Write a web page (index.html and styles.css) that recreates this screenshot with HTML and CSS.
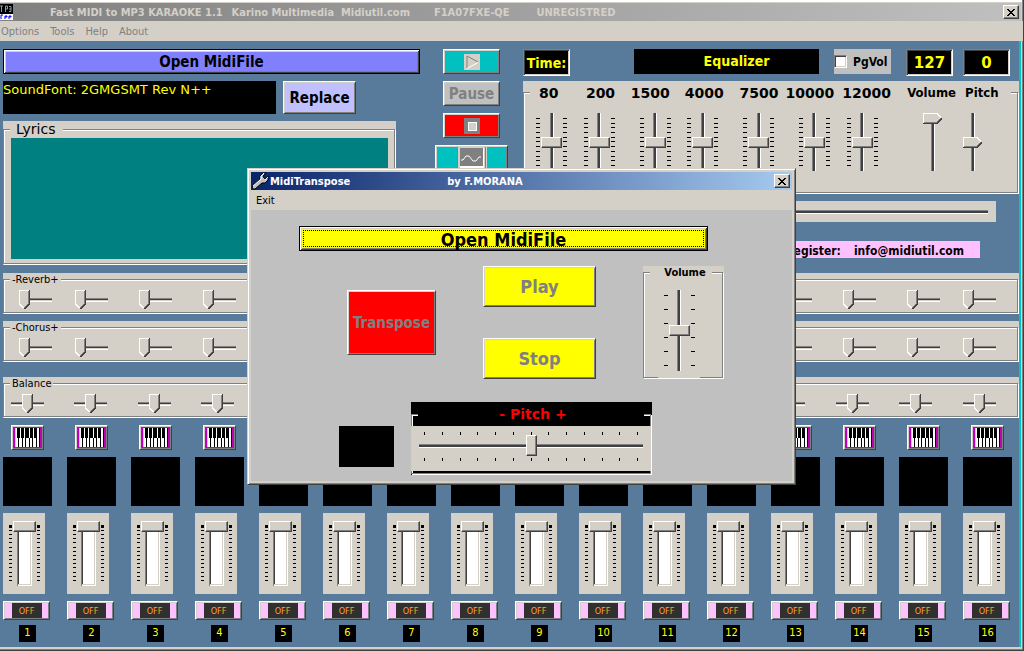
FILE: index.html
```html
<!DOCTYPE html>
<html lang="en">
<head>
    <meta charset="UTF-8">
    <meta name="viewport" content="width=device-width, initial-scale=1.0">
    <title>Fast MIDI to MP3 KARAOKE</title>
    <link rel="stylesheet" href="styles.css">
</head>
<body>

<svg class="symbols" aria-hidden="true">
    <symbol id="icon-close" viewBox="0 0 10 9">
        <path d="M1 1h2v1h1v1h2V2h1V1h2v1H8v1H7v1H6v1h1v1h1v1h1v1H7V7H6V6H4v1H3v1H1V7h1V6h1V5h1V4H3V3H2V2H1z" fill="#000"/>
    </symbol>
    <symbol id="icon-keys" viewBox="0 0 29 21">
        <path d="M0 0h29v21H0z" fill="#c000c0"/>
        <path d="M2 1h25v19H2z" fill="#fff"/>
        <path d="M2 1h1v19H2z" fill="#d4d0c8"/>
        <path d="M4 1h3v10H4zM8 1h3v10H8zM13 1h3v10h-3zM17 1h3v10h-3zM21 1h3v10h-3zM26 1h1v19h-1zM5 11h1v9H5zM9 11h1v9H9zM12 1h1v19h-1zM16 11h1v9h-1zM19 11h1v9h-1zM23 11h1v9h-1z" fill="#000"/>
    </symbol>
</svg>

<div class="window">
    <div class="titlebar">
        <svg class="app-icon" viewBox="0 0 13 16">
            <path d="M0 0h13v10H0z" fill="#000"/>
            <path d="M0 10h13v6H0z" fill="#fff"/>
            <path d="M0 2h3M1.500 2v6M5.500 8V2h2v3h-2M9 2.500h2v5H9M9 5h2" stroke="#8898b8" fill="none"/>
            <path d="M1 15v-4h2M5 15v-3h2v1H5M9 15v-3h2v1H9" stroke="#00f" fill="none"/>
        </svg>
        <span class="title-name">Fast MIDI to MP3 KARAOKE 1.1</span>
        <span class="title-vendor">Karino Multimedia&nbsp; Midiutil.com</span>
        <span class="title-code">F1A07FXE-QE</span>
        <span class="title-status">UNREGISTRED</span>
        <button class="close" aria-label="Close"><svg width="10" height="9"><use href="#icon-close"/></svg></button>
    </div>
    <nav class="menu">
        <a href="#options">Options</a>
        <a href="#tools">Tools</a>
        <a href="#help">Help</a>
        <a href="#about">About</a>
    </nav>

    <div class="client">
        <div class="top">
            <div class="left">
                <button class="btn open-main">Open MidiFile</button>
                <div class="font-row">
                    <div class="soundfont">SoundFont: 2GMGSMT Rev N++</div>
                    <button class="btn replace">Replace</button>
                </div>
                <div class="panel lyrics">
                    <fieldset>
                        <legend>Lyrics</legend>
                        <div class="lyrics-screen"></div>
                    </fieldset>
                </div>
            </div>

            <div class="transport">
                <button class="btn play-main" aria-label="Play">
                    <svg width="16" height="16" viewBox="0 0 16 16"><path d="M0 0h16v16H0z" fill="#d4d0c8"/><path d="M3 14V2l11 6" fill="none" stroke="#808080"/><path d="M3 14.500L14 8.500" stroke="#fff"/></svg>
                </button>
                <button class="btn pause-main" disabled>Pause</button>
                <button class="btn stop-main" aria-label="Stop">
                    <svg width="16" height="16" viewBox="0 0 16 16"><path d="M0 0h16v16H0z" fill="#808080"/><path d="M4 4h9v9H4z" fill="#fff"/><path d="M5 5h7v7H5z" fill="#d4d0c8"/></svg>
                </button>
                <button class="btn wave-main" aria-label="Wave">
                    <svg width="30" height="22" viewBox="0 0 30 22"><path d="M0 0h30v22H0z" fill="#d4d0c8"/><path d="M0 0h1v22H0zM28 0h1v22h-1z" fill="#808080"/><path d="M3 1h24v20H3z" fill="#fff"/><path d="M3 1h23v18H3z" fill="#808080"/><path d="M4 13h2l3-4h3l4 5h3l3-4h2" fill="none" stroke="#fff"/></svg>
                </button>
            </div>

            <div class="right">
                <div class="readouts">
                    <div class="readout time">Time:</div>
                    <div class="eq-title">Equalizer</div>
                    <label class="pgvol"><input type="checkbox">PgVol</label>
                    <output class="readout volume-value">127</output>
                    <output class="readout">0</output>
                </div>
                <div class="panel equalizer">
                    <fieldset>
                        <legend>
                            <label for="eq-80">80</label>
                            <label for="eq-200">200</label>
                            <label for="eq-1500">1500</label>
                            <label for="eq-4000">4000</label>
                            <label for="eq-7500">7500</label>
                            <label for="eq-10000">10000</label>
                            <label for="eq-12000">12000</label>
                            <label class="word" for="main-volume">Volume</label>
                            <label class="word" for="main-pitch">Pitch</label>
                        </legend>
                        <div class="eq-sliders">
                            <div class="ticked"><span class="ticks" data-count="11"></span><input id="eq-80" class="vertical" type="range"><span class="ticks" data-count="11"></span></div>
                            <div class="ticked"><span class="ticks" data-count="11"></span><input id="eq-200" class="vertical" type="range"><span class="ticks" data-count="11"></span></div>
                            <div class="ticked"><span class="ticks" data-count="11"></span><input id="eq-1500" class="vertical" type="range"><span class="ticks" data-count="11"></span></div>
                            <div class="ticked"><span class="ticks" data-count="11"></span><input id="eq-4000" class="vertical" type="range"><span class="ticks" data-count="11"></span></div>
                            <div class="ticked"><span class="ticks" data-count="11"></span><input id="eq-7500" class="vertical" type="range"><span class="ticks" data-count="11"></span></div>
                            <div class="ticked"><span class="ticks" data-count="11"></span><input id="eq-10000" class="vertical" type="range"><span class="ticks" data-count="11"></span></div>
                            <div class="ticked"><span class="ticks" data-count="11"></span><input id="eq-12000" class="vertical" type="range"><span class="ticks" data-count="11"></span></div>
                            <input id="main-volume" class="vertical pointed" type="range" max="127" value="127">
                            <input id="main-pitch" class="vertical pointed" type="range" min="-12" max="12" value="0">
                        </div>
                    </fieldset>
                </div>
                <div class="position"><input class="horizontal" type="range" value="0" aria-label="Song position"></div>
                <div class="register"><span>To register:</span><span>info@midiutil.com</span></div>
            </div>
        </div>

        <div class="panel effect">
            <fieldset>
                <legend>-Reverb+</legend>
                <div class="effect-row" data-effect="Reverb" data-value="0"></div>
            </fieldset>
        </div>
        <div class="panel effect">
            <fieldset>
                <legend>-Chorus+</legend>
                <div class="effect-row" data-effect="Chorus" data-value="0"></div>
            </fieldset>
        </div>
        <div class="panel effect balance">
            <fieldset>
                <legend>Balance</legend>
                <div class="effect-row" data-effect="Balance" data-value="64"></div>
            </fieldset>
        </div>

        <div class="channels" id="channels"></div>
    </div>
</div>

<div class="dialog" role="dialog" aria-label="MidiTranspose">
    <div class="dialog-title">
        <svg width="18" height="18" viewBox="0 0 18 18">
            <path d="M1 15L9 7V4l3-3h3l-3 3 1 2 2 1 2-3v4l-3 3h-3l-7 6H2z" fill="#c0c0c0" stroke="#000"/>
            <path d="M2 14l8-7V4l3-3M14 8l3-3" stroke="#fff" fill="none"/>
        </svg>
        <span class="dialog-name">MidiTranspose</span>
        <span>by F.MORANA</span>
        <button class="close" aria-label="Close"><svg width="10" height="9"><use href="#icon-close"/></svg></button>
    </div>
    <nav class="menu"><a href="#exit">Exit</a></nav>
    <div class="dialog-body">
        <button class="btn open-dialog"><span>Open MidiFile</span></button>
        <div class="dialog-controls">
            <button class="btn transpose" disabled>Transpose</button>
            <div class="play-stop">
                <button class="btn" disabled>Play</button>
                <button class="btn" disabled>Stop</button>
            </div>
            <div class="panel dialog-volume">
                <fieldset>
                    <legend><label for="dialog-volume">Volume</label></legend>
                    <div class="ticked"><span class="ticks" data-count="6"></span><input id="dialog-volume" class="vertical" type="range"><span class="ticks" data-count="6"></span></div>
                </fieldset>
            </div>
        </div>
        <div class="dialog-bottom">
            <div class="display"></div>
            <div class="dialog-pitch">
                <fieldset>
                    <legend><label for="dialog-pitch">- Pitch +</label></legend>
                    <div class="pitch-track">
                        <span class="ticks across" data-count="13"></span>
                        <input id="dialog-pitch" class="horizontal" type="range" min="-6" max="6" value="0">
                        <span class="ticks across" data-count="13"></span>
                    </div>
                </fieldset>
            </div>
        </div>
    </div>
</div>

<script src="script.js"></script>
</body>
</html>
```
FILE: styles.css
```css
* {
    box-sizing: border-box;
}
body {
    margin: 0;
    font-family: "DejaVu Sans Condensed", "DejaVu Sans", sans-serif;
    font-size: 11px;
    color: #000;
    background: #d4d0c8;
}
button, input {
    font-family: inherit;
    margin: 0;
}
button {
    padding: 0;
}
fieldset {
    margin: 0;
    padding: 0;
    min-width: 0;
    border: 1px solid #808080;
    box-shadow: inset 1px 1px #fff, 1px 1px #fff;
}
legend {
    padding: 0;
}
.symbols {
    display: none;
}

/* main window */
.window {
    display: flex;
    flex-direction: column;
    min-height: 100vh;
    padding-top: 3px;
    border-right: 1px solid #404040;
    border-bottom: 1px solid #404040;
    box-shadow: inset -1px -1px #808080, inset 0 2px #fff;
}
.titlebar {
    display: flex;
    align-items: center;
    height: 18px;
    margin-right: 2px;
    padding-right: 2px;
    background: linear-gradient(to right, #808080, #c0c0c0);
    color: #d4d0c8;
    font-weight: bold;
    white-space: nowrap;
}
.app-icon {
    width: 13px;
    height: 16px;
}
.title-name {
    margin-left: 37px;
}
.title-vendor {
    margin-left: 9px;
}
.title-code {
    margin-left: 24px;
}
.title-status {
    margin-left: 27px;
}
.close {
    display: flex;
    align-items: center;
    justify-content: center;
    width: 16px;
    height: 14px;
    margin-left: auto;
    background: #d4d0c8;
    border: 1px solid;
    border-color: #fff #404040 #404040 #fff;
    box-shadow: inset -1px -1px #808080;
}
.menu {
    display: flex;
    gap: 11px;
    height: 20px;
    line-height: 22px;
    padding-left: 1px;
    background: #d4d0c8;
}
.menu a {
    color: #808080;
    text-decoration: none;
}
.client {
    flex: 1;
    margin: 0 2px 3px 0;
    padding: 8px 0 0 3px;
    background: #587a9b;
    border-right: 2px solid #00c4c4;
}

/* shared controls */
.btn {
    display: flex;
    align-items: center;
    justify-content: center;
    border: 1px solid;
    border-color: #fff #404040 #404040 #fff;
    box-shadow: inset 1px 1px #d4d0c8, inset -1px -1px #808080;
    font-weight: bold;
    color: #000;
}
.btn:disabled {
    color: #808080;
}
.panel {
    background: #d4d0c8;
}
.ticked {
    display: flex;
    gap: 1px;
}
.ticks {
    display: flex;
    flex-direction: column;
    justify-content: space-between;
    width: 4px;
}
.ticks i {
    height: 1px;
    background: #000;
}
.ticks.across {
    flex-direction: row;
    width: auto;
    height: 3px;
}
.ticks.across i {
    width: 1px;
    height: 3px;
}
input[type="range"] {
    display: block;
    appearance: none;
    -webkit-appearance: none;
    background: none;
}
.vertical {
    writing-mode: vertical-lr;
    direction: rtl;
    width: 21px;
    height: 58px;
}
.vertical::-webkit-slider-runnable-track {
    width: 100%;
    height: 100%;
    background: linear-gradient(to right, #808080 1px, #404040 1px 3px, #fff 3px) center / 4px 100% no-repeat;
}
.vertical::-webkit-slider-thumb {
    -webkit-appearance: none;
    width: 21px;
    height: 11px;
    background: #d4d0c8;
    border: 1px solid;
    border-color: #fff #404040 #404040 #fff;
    box-shadow: inset -1px -1px #808080;
}
.vertical.pointed {
    width: 19px;
}
.vertical.pointed::-webkit-slider-thumb {
    width: 19px;
    border: 0;
    box-shadow: none;
    background: url("data:image/svg+xml,%3Csvg xmlns='http://www.w3.org/2000/svg' width='19' height='11' shape-rendering='crispEdges'%3E%3Cpath d='M0 0h14l5 5v1l-5 5H0z' fill='%23d4d0c8'/%3E%3Cpath d='M.5 10V.5H14l4 4' fill='none' stroke='%23fff'/%3E%3Cpath d='M1 9.500h13l4-4' fill='none' stroke='%23808080'/%3E%3Cpath d='M0 10.500h14l5-5' fill='none' stroke='%23404040'/%3E%3C/svg%3E") no-repeat;
}
.horizontal {
    width: 100%;
    height: 21px;
}
.horizontal::-webkit-slider-runnable-track {
    height: 100%;
    background: linear-gradient(#808080 1px, #404040 1px 3px, #fff 3px) center / 100% 4px no-repeat;
}
.horizontal::-webkit-slider-thumb {
    -webkit-appearance: none;
    width: 11px;
    height: 21px;
    background: #d4d0c8;
    border: 1px solid;
    border-color: #fff #404040 #404040 #fff;
    box-shadow: inset -1px -1px #808080;
}

/* top area */
.top {
    display: grid;
    grid-template-columns: minmax(0, 417fr) 73px minmax(0, 496fr);
    column-gap: 15px;
}
.left {
    display: flex;
    flex-direction: column;
    gap: 7px;
}
.open-main {
    height: 25px;
    background: #8080ff;
    border: 1px solid #000;
    box-shadow: inset 1px 1px #fff, inset -1px -1px #404040, inset 2px 2px #d4d0c8, inset -2px -2px #808080;
    font-size: 15px;
}
.font-row {
    display: flex;
    gap: 7px;
    margin-right: 64px;
}
.soundfont {
    flex: 1;
    height: 33px;
    background: #000;
    color: #ff0;
    font-family: "DejaVu Sans", sans-serif;
    font-size: 13px;
    line-height: 18px;
    white-space: nowrap;
}
.replace {
    width: 73px;
    height: 33px;
    background: #c0c0ff;
    font-size: 15px;
}
.lyrics {
    margin-right: 24px;
    padding: 0 1px 1px 0;
}
.lyrics legend {
    margin-left: 6px;
    padding: 0 8px 0 6px;
    background: #d4d0c8;
    font-family: "DejaVu Sans", sans-serif;
    font-size: 14px;
    line-height: 17px;
}
.lyrics-screen {
    height: 121px;
    margin: 0 6px 4px 7px;
    background: #008080;
}
.transport {
    display: flex;
    flex-direction: column;
    align-items: center;
    gap: 7px;
}
.transport .btn {
    width: 57px;
    height: 25px;
}
.transport .play-main {
    background: #00c0c0;
}
.transport .pause-main {
    background: #c0c0c0;
    font-size: 15px;
}
.transport .stop-main {
    background: #f00;
}
.transport .wave-main {
    width: 73px;
    background: #00c0c0;
}
.readouts {
    display: flex;
    height: 32px;
    margin-right: 9px;
    font-weight: bold;
    font-size: 15px;
}
.readout {
    width: 47px;
    height: 27px;
    background: #000;
    border: 1px solid;
    border-color: #808080 #fff #fff #808080;
    box-shadow: inset 1px 1px #404040, inset -1px -1px #d4d0c8;
    color: #ff0;
    line-height: 26px;
    text-align: center;
    font-family: "DejaVu Sans", sans-serif;
}
.readout.time {
    font-family: "DejaVu Sans Condensed", "DejaVu Sans", sans-serif;
    font-size: 14px;
    margin-right: auto;
}
.eq-title {
    width: 185px;
    height: 25px;
    padding-left: 20px;
    background: #000;
    color: #ff0;
    font-size: 14px;
    line-height: 25px;
    text-align: center;
}
.pgvol {
    display: flex;
    align-items: center;
    gap: 6px;
    width: 57px;
    height: 25px;
    margin: 0 15px;
    background: #c0c0c0;
    font-size: 12px;
}
.pgvol input {
    appearance: none;
    -webkit-appearance: none;
    flex: none;
    width: 13px;
    height: 13px;
    background: #fff;
    border: 1px solid;
    border-color: #808080 #fff #fff #808080;
    box-shadow: inset 1px 1px #404040, inset -1px -1px #d4d0c8;
}
.volume-value {
    margin-right: 10px;
}
.equalizer {
    padding: 0 1px 1px 0;
}
.equalizer legend {
    display: grid;
    grid-template-columns: 47fr 45fr 54fr 55fr 46fr 57fr 65fr 58fr 46fr;
    width: calc(100% - 12px);
    height: 22px;
    margin-left: 6px;
    padding-left: 9px;
    background: #d4d0c8;
    font-family: "DejaVu Sans", sans-serif;
    font-weight: bold;
    font-size: 14px;
    line-height: 24px;
}
.equalizer legend label {
    min-width: 0;
    white-space: nowrap;
}
.equalizer .word {
    font-family: "DejaVu Sans Condensed", "DejaVu Sans", sans-serif;
    font-size: 13px;
}
.eq-sliders {
    display: grid;
    grid-template-columns: 48fr 56fr 48fr 56fr 56fr 48fr 77fr 40fr 54fr;
    height: 89px;
    padding: 10px 0 0 12px;
}
.eq-sliders .ticks {
    height: 48px;
    margin-top: 5px;
}
.position {
    height: 21px;
    margin: 7px 23px 0 0;
    padding: 0 8px;
    background: #d4d0c8;
}
.register {
    display: flex;
    justify-content: flex-end;
    gap: 13px;
    height: 17px;
    margin: 19px 39px 0 200px;
    padding-right: 16px;
    background: #ffc0ff;
    font-size: 12px;
    font-weight: bold;
    line-height: 20px;
}

/* effect rows */
.effect {
    margin-top: 7px;
    padding: 0 1px 1px 0;
}
.top + .effect {
    margin-top: 8px;
}
.effect.balance {
    margin-top: 15px;
}
.effect legend {
    margin-left: 6px;
    padding: 0 2px;
    background: #d4d0c8;
    line-height: 13px;
}
.effect-row {
    display: flex;
    justify-content: space-between;
    height: 26px;
    margin: 0 21px 0 7px;
    padding-top: 4px;
}
.effect-row input {
    width: 33px;
    height: 19px;
}
.effect-row input::-webkit-slider-runnable-track {
    background: linear-gradient(#808080 1px, #404040 1px 2px, #d4d0c8 2px 3px, #fff 3px) center / 100% 4px no-repeat;
}
.effect-row input::-webkit-slider-thumb {
    height: 19px;
    border: 0;
    box-shadow: none;
    background: url("data:image/svg+xml,%3Csvg xmlns='http://www.w3.org/2000/svg' width='11' height='19' shape-rendering='crispEdges'%3E%3Cpath d='M0 0h11v14l-5 5H5l-5-5z' fill='%23d4d0c8'/%3E%3Cpath d='M10 .5H.5V14l4 4' fill='none' stroke='%23fff'/%3E%3Cpath d='M9.500 1v13l-4 4' fill='none' stroke='%23808080'/%3E%3Cpath d='M10.500 0v14l-5 5' fill='none' stroke='%23404040'/%3E%3C/svg%3E") no-repeat;
}
/* reverb and chorus keep their outer sliders 8px in from the channel strips */
.effect:not(.balance) .effect-row {
    margin-right: 13px;
}
.effect:not(.balance) input:first-child {
    margin: 0 -8px 0 8px;
}
.effect:not(.balance) input:last-child {
    margin: 0 8px 0 -8px;
}

/* channels */
.channels {
    display: flex;
    justify-content: space-between;
    margin: 7px 7px 0 0;
}
.channel {
    display: flex;
    flex-direction: column;
    gap: 7px;
    width: 49px;
}
.channel-keys {
    width: 33px;
    height: 25px;
    margin-left: 8px;
    background: #d4d0c8;
}
.channel-screen {
    height: 49px;
    background: #000;
}
.fader {
    display: flex;
    justify-content: center;
    gap: 1px;
    width: 42px;
    height: 81px;
    padding-top: 8px;
    background: #d4d0c8;
}
.fader .ticks {
    width: 3px;
    height: 51px;
    margin-top: 9px;
}
.fader .ticks i:first-child {
    height: 1px;
    box-shadow: 0 -3px #000, 0 -4px #000, 0 -5px #000;
}
.fader .vertical {
    width: 23px;
    height: 65px;
}
.fader .vertical::-webkit-slider-runnable-track {
    background:
        linear-gradient(#d4d0c8 1px, #fff 1px) center bottom / 13px 2px no-repeat,
        linear-gradient(to right, #808080 1px, #404040 1px 2px, #fff 2px 13px, #d4d0c8 13px 14px, #fff 14px) center / 15px 100% no-repeat;
}
.fader .vertical::-webkit-slider-thumb {
    width: 23px;
}
.channel-off {
    width: 47px;
    height: 19px;
    background: #ffc0ff;
    font-size: 9px;
    font-weight: normal;
}
.channel-off span {
    width: 30px;
    height: 15px;
    background: #303030;
    color: #ffa020;
    line-height: 16px;
}
.channel-number {
    width: 17px;
    height: 17px;
    margin: -2px 0 0 16px;
    background: #000;
    color: #ff0;
    line-height: 16px;
    text-align: center;
}

/* transpose dialog */
.dialog {
    position: absolute;
    top: 168px;
    left: 247px;
    width: 549px;
    padding: 3px;
    background: #d4d0c8;
    border: 1px solid;
    border-color: #d4d0c8 #404040 #404040 #d4d0c8;
    box-shadow: inset 1px 1px #fff, inset -1px -1px #808080;
}
.dialog-title {
    display: flex;
    align-items: center;
    height: 18px;
    padding-right: 2px;
    background: linear-gradient(to right, #0a246a, #a6caf0);
    color: #fff;
    font-weight: bold;
}
.dialog-title svg {
    flex: none;
}
.dialog-name {
    margin: 0 97px 0 1px;
}
.dialog .menu {
    padding-left: 5px;
}
.dialog .menu a {
    color: #000;
}
.dialog-body {
    display: flex;
    flex-direction: column;
    padding: 16px 0 6px;
    background: #c0c0c0;
}
.open-dialog {
    height: 25px;
    margin: 0 84px 0 48px;
    padding: 3px;
    background: #ff0;
    border: 1px solid #000;
    box-shadow: inset 1px 1px #fff, inset -1px -1px #404040, inset 2px 2px #d4d0c8, inset -2px -2px #808080;
    font-size: 18px;
}
.open-dialog span {
    flex: 1;
    height: 17px;
    border: 1px dotted #000;
    line-height: 17px;
}
.dialog-controls {
    display: flex;
    align-items: flex-start;
    gap: 47px;
    margin-top: 15px;
    padding-left: 96px;
}
.transpose {
    width: 89px;
    height: 65px;
    margin-top: 24px;
    background: #f00;
    font-size: 15px;
}
.play-stop {
    display: flex;
    flex-direction: column;
    gap: 31px;
}
.play-stop .btn {
    width: 113px;
    height: 41px;
    background: #ff0;
    font-size: 18px;
}
.dialog-volume {
    width: 81px;
    padding: 0 1px 1px 0;
}
.dialog-volume legend {
    width: 62px;
    margin-left: 6px;
    padding-left: 8px;
    background: #d4d0c8;
    font-size: 11px;
    font-weight: bold;
    line-height: 13px;
}
/* text-align on a legend moves the legend itself, so it goes on the label */
.dialog legend label {
    display: block;
    text-align: center;
}
.dialog-volume .ticked {
    justify-content: center;
    height: 99px;
    margin: 0 22px -1px 14px;
    padding-top: 11px;
    background: #d4d0c8;
}
.dialog-volume .vertical {
    height: 81px;
}
.dialog-volume .ticks {
    height: 71px;
    margin-top: 5px;
}
.dialog-bottom {
    display: flex;
    align-items: flex-end;
    gap: 17px;
    margin-top: 23px;
    padding-left: 88px;
}
.display {
    width: 55px;
    height: 41px;
    margin-bottom: 8px;
    background: #000;
}
.dialog-pitch {
    width: 241px;
    padding: 0 1px 1px 0;
    background: #000;
}
.dialog-pitch legend {
    width: calc(100% - 12px);
    height: 24px;
    margin-left: 6px;
    padding-left: 4px;
    background: #000;
    color: #f00;
    font-family: "DejaVu Sans", sans-serif;
    font-size: 14px;
    font-weight: bold;
    line-height: 24px;
}
.pitch-track {
    height: 45px;
    margin: 0 -1px 2px;
    padding: 6px 8px 0;
    background: #d4d0c8;
}
.pitch-track .ticks {
    margin: 0 5px;
}
.pitch-track .ticks:last-child {
    margin-top: 2px;
}
```
FILE: script.js
```javascript
var CHANNELS = 16;

function ticks(count) {
    return '<i></i>'.repeat(count);
}

document.querySelectorAll('.effect-row').forEach(function (row) {
    var html = '';
    for (var n = 1; n <= CHANNELS; n++) {
        html += '<input class="horizontal" type="range" max="128" value="' + row.dataset.value +
            '" aria-label="' + row.dataset.effect + ' ' + n + '">';
    }
    row.innerHTML = html;
});

var strips = '';
for (var n = 1; n <= CHANNELS; n++) {
    strips +=
        '<div class="channel">' +
            '<button class="btn channel-keys" aria-label="Instrument ' + n + '"><svg width="29" height="21"><use href="#icon-keys"/></svg></button>' +
            '<div class="channel-screen"></div>' +
            '<div class="fader">' +
                '<span class="ticks">' + ticks(13) + '</span>' +
                '<input id="fader-' + n + '" class="vertical" type="range" max="127" value="127">' +
                '<span class="ticks">' + ticks(13) + '</span>' +
            '</div>' +
            '<button class="btn channel-off"><span>OFF</span></button>' +
            '<label class="channel-number" for="fader-' + n + '">' + n + '</label>' +
        '</div>';
}
document.getElementById('channels').innerHTML = strips;

document.querySelectorAll('.ticks[data-count]').forEach(function (el) {
    el.innerHTML = ticks(Number(el.dataset.count));
});
```
